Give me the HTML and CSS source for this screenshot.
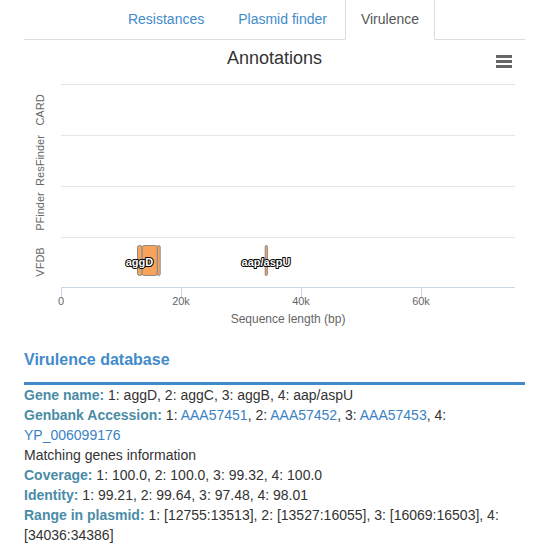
FILE: index.html
```html
<!DOCTYPE html>
<html>
<head>
<meta charset="utf-8">
<link rel="stylesheet" href="styles.css">
</head>
<body>
<div class="page">
  <ul class="tabs">
    <li class="tab"><a class="tab-link">Resistances</a></li>
    <li class="tab"><a class="tab-link">Plasmid finder</a></li>
    <li class="tab active"><a class="tab-link">Virulence</a></li>
  </ul>

  <svg class="chart" width="501" height="300" viewBox="0 0 501 300">
    <text class="c-title" x="250.5" y="24">Annotations</text>
    <path class="c-menu" d="M472 16.5h16M472 21.5h16M472 26.5h16"/>

    <path class="c-grid" d="M37 44.5H491M37 95.5H491M37 146.5H491M37 197.5H491"/>
    <path class="c-axis" d="M37 247.5H491"/>
    <path class="c-axis" d="M37.5 247V257M157.5 247V257M277.5 247V257M397.5 247V257"/>

    <text class="c-ylab" transform="translate(20,70) rotate(-90)">CARD</text>
    <text class="c-ylab" transform="translate(20,120.5) rotate(-90)">ResFinder</text>
    <text class="c-ylab" transform="translate(20,171.5) rotate(-90)">PFinder</text>
    <text class="c-ylab" transform="translate(20,222) rotate(-90)">VFDB</text>

    <text class="c-xlab" x="37" y="265">0</text>
    <text class="c-xlab" x="157" y="265">20k</text>
    <text class="c-xlab" x="277" y="265">40k</text>
    <text class="c-xlab" x="397" y="265">60k</text>
    <text class="c-xtitle" x="264" y="283">Sequence length (bp)</text>

    <rect class="c-bar" x="113.5" y="205.5" width="4.6" height="30" rx="2"/>
    <rect class="c-bar" x="118.2" y="205.5" width="15.1" height="30" rx="2"/>
    <rect class="c-bar" x="133.4" y="205.5" width="2.8" height="30" rx="1.4"/>
    <rect class="c-bar" x="241.2" y="205.5" width="2.2" height="30" rx="1"/>

    <text class="c-dl" x="115.5" y="226">aggD</text>
    <text class="c-dl" x="242" y="226">aap/aspU</text>
  </svg>

  <div class="vir">
    <h3 class="vir-title">Virulence database</h3>
    <div class="vir-line"><span class="lbl">Gene name:</span> 1: aggD, 2: aggC, 3: aggB, 4: aap/aspU</div>
    <div class="vir-line"><span class="lbl">Genbank Accession:</span> 1: <a class="lnk">AAA57451</a>, 2: <a class="lnk">AAA57452</a>, 3: <a class="lnk">AAA57453</a>, 4: <a class="lnk">YP_006099176</a></div>
    <div class="vir-line">Matching genes information</div>
    <div class="vir-line"><span class="lbl">Coverage:</span> 1: 100.0, 2: 100.0, 3: 99.32, 4: 100.0</div>
    <div class="vir-line"><span class="lbl">Identity:</span> 1: 99.21, 2: 99.64, 3: 97.48, 4: 98.01</div>
    <div class="vir-line"><span class="lbl">Range in plasmid:</span> 1: [12755:13513], 2: [13527:16055], 3: [16069:16503], 4: [34036:34386]</div>
  </div>
</div>
</body>
</html>
```

FILE: styles.css
```css
html, body {
  margin: 0;
  padding: 0;
  background: #fff;
}
body {
  font-family: "Liberation Sans", Arial, sans-serif;
  font-size: 14px;
  line-height: 20px;
  color: #333;
  overflow: hidden;
}
.page {
  width: 501px;
  margin-left: 24px;
}
.tabs {
  list-style: none;
  margin: -2px 0 0 0;
  padding: 0;
  display: flex;
  justify-content: center;
  border-bottom: 1px solid #ddd;
}
.tab {
  margin-bottom: -1px;
  margin-right: 2px;
}
.tab-link {
  display: block;
  padding: 10px 15px;
  border: 1px solid transparent;
  color: #428bca;
  cursor: pointer;
}
.tab.active .tab-link {
  color: #555;
  background: #fff;
  border-color: #ddd #ddd transparent #ddd;
}
.chart {
  display: block;
  font-family: "Liberation Sans", Arial, sans-serif;
}
.c-title {
  font-size: 18px;
  fill: #333;
  text-anchor: middle;
}
.c-menu {
  stroke: #666;
  stroke-width: 3;
  fill: none;
}
.c-grid {
  stroke: #e6e6e6;
  stroke-width: 1;
  fill: none;
}
.c-axis {
  stroke: #ccd6eb;
  stroke-width: 1;
  fill: none;
}
.c-ylab {
  font-size: 11px;
  fill: #666;
  text-anchor: middle;
}
.c-xlab {
  font-size: 11px;
  fill: #666;
  text-anchor: middle;
}
.c-xtitle {
  font-size: 12px;
  fill: #666;
  text-anchor: middle;
}
.c-bar {
  fill: #f7a35c;
  stroke: #8a8a8a;
  stroke-width: 1;
}
.c-dl {
  font-size: 11px;
  font-weight: bold;
  text-anchor: middle;
  fill: #fff;
  stroke: #000;
  stroke-width: 2;
  stroke-linejoin: round;
  paint-order: stroke;
}
.vir {
  margin-top: 10px;
}
.vir-title {
  margin: 0;
  font-size: 16px;
  line-height: 20px;
  font-weight: bold;
  color: #428bca;
  padding-bottom: 12px;
  border-bottom: 3px solid #428bca;
}
.vir-line {
  line-height: 20px;
}
.lbl {
  font-weight: bold;
  color: #4a8ca6;
}
.lnk {
  color: #3a82c4;
  cursor: pointer;
}
```
